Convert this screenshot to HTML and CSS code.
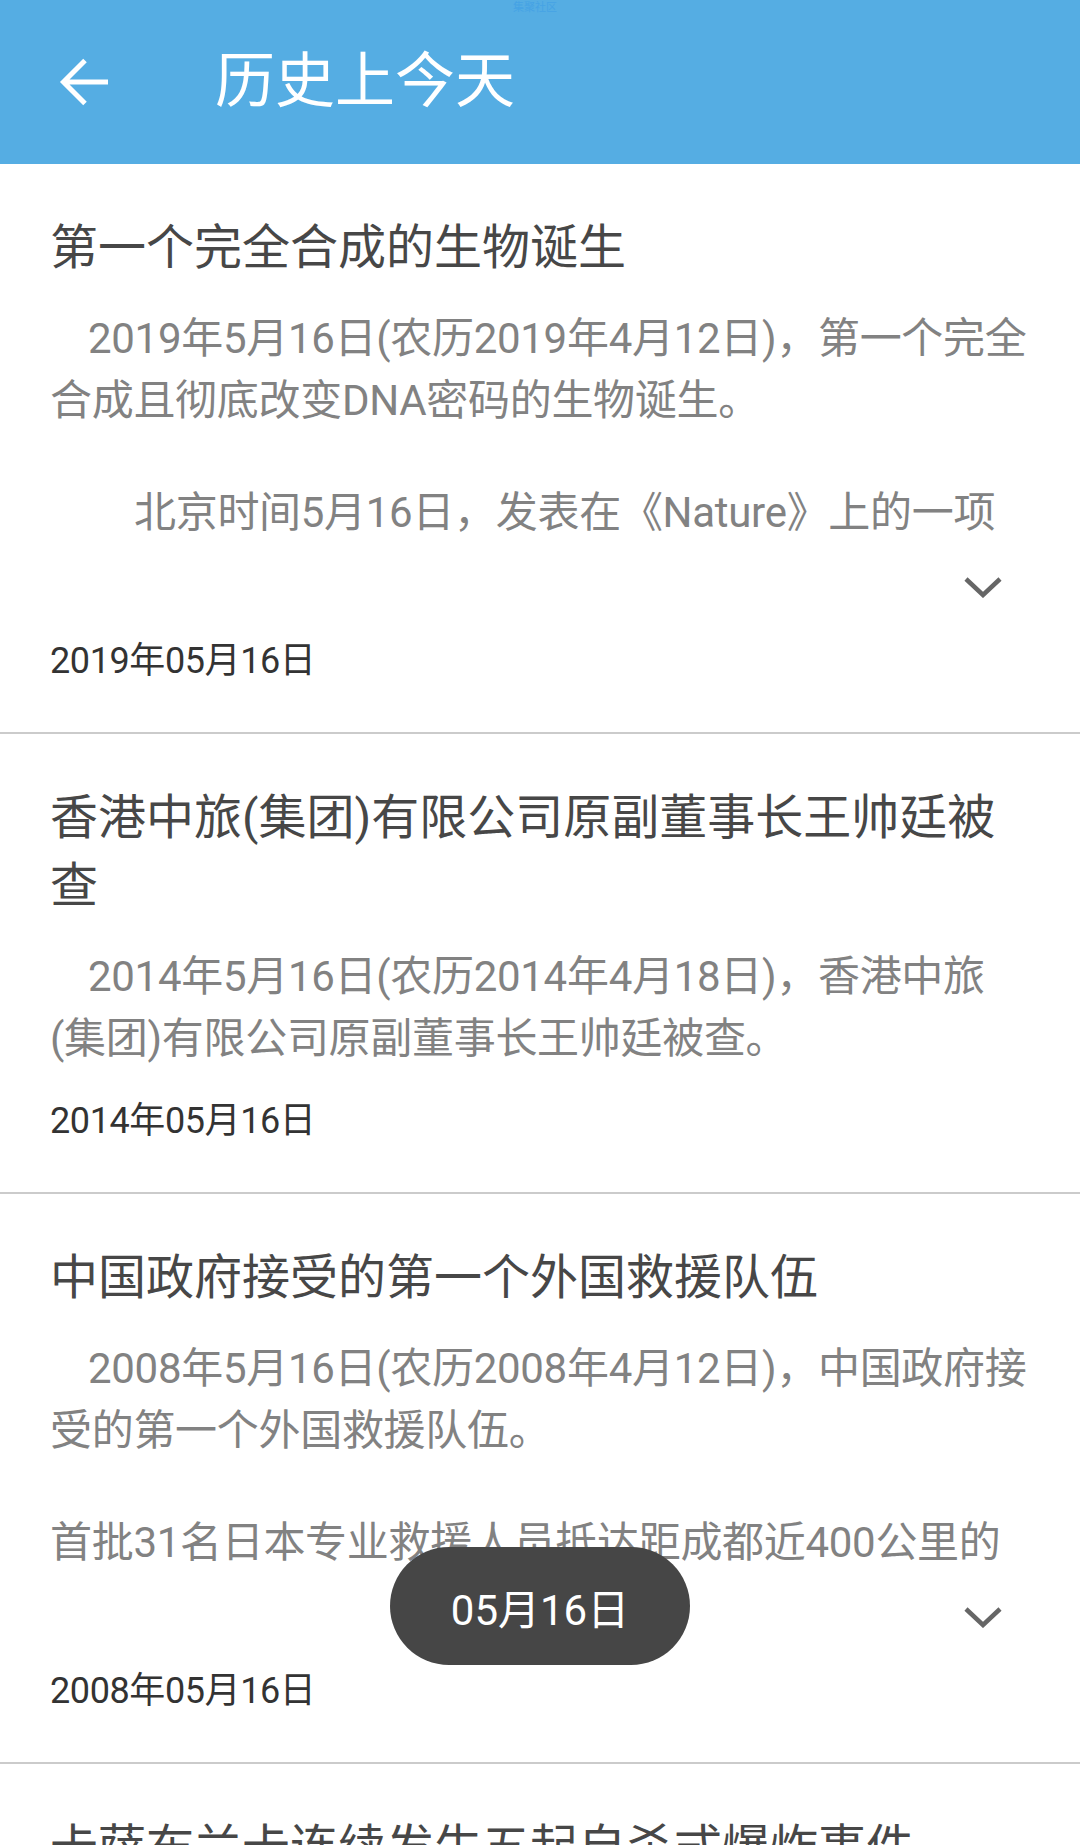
FILE: index.html
```html
<!DOCTYPE html>
<html lang="zh-CN">
<head>
<meta charset="utf-8">
<title>历史上今天</title>
<link rel="stylesheet" href="styles.css">
</head>
<body>
<header class="appbar">
  <span class="watermark">集聚社区</span>
  <button class="back" aria-label="返回">
    <svg width="50" height="48" viewBox="0 0 50 48"><path d="M49 24H4M26 2.5L4.5 24L26 45.5" fill="none" stroke="#fff" stroke-width="5"/></svg>
  </button>
  <h1 class="appbar-title">历史上今天</h1>
</header>

<main class="list">
  <article class="item">
    <h2 class="item-title">第一个完全合成的生物诞生</h2>
    <div class="item-body">
      <p class="indent">2019年5月16日(农历2019年4月12日)，第一个完全合成且彻底改变DNA密码的生物诞生。</p>
      <p class="indent2 clip">北京时间5月16日，发表在《Nature》上的一项</p>
    </div>
    <div class="more"><svg width="40" height="22" viewBox="0 0 40 22"><polyline points="3,3 20,19 37,3" fill="none" stroke="#666" stroke-width="4.5"/></svg></div>
    <time class="item-date">2019年05月16日</time>
  </article>

  <article class="item">
    <h2 class="item-title">香港中旅(集团)有限公司原副董事长王帅廷被查</h2>
    <div class="item-body">
      <p class="indent">2014年5月16日(农历2014年4月18日)，香港中旅(集团)有限公司原副董事长王帅廷被查。</p>
    </div>
    <time class="item-date">2014年05月16日</time>
  </article>

  <article class="item">
    <h2 class="item-title">中国政府接受的第一个外国救援队伍</h2>
    <div class="item-body">
      <p class="indent">2008年5月16日(农历2008年4月12日)，中国政府接受的第一个外国救援队伍。</p>
      <p class="clip">首批31名日本专业救援人员抵达距成都近400公里的</p>
    </div>
    <div class="more"><svg width="40" height="22" viewBox="0 0 40 22"><polyline points="3,3 20,19 37,3" fill="none" stroke="#666" stroke-width="4.5"/></svg></div>
    <time class="item-date">2008年05月16日</time>
  </article>

  <article class="item">
    <h2 class="item-title">卡萨布兰卡连续发生五起自杀式爆炸事件</h2>
    <div class="item-body">
      <p class="indent">2003年5月16日(农历2003年4月16日)，卡萨布兰卡连续发生五起自杀式爆炸事件。</p>
    </div>
    <time class="item-date">2003年05月16日</time>
  </article>
</main>

<div class="toast">05月16日</div>
</body>
</html>
```

FILE: styles.css
```css
* { box-sizing: border-box; }

html, body {
  margin: 0;
  padding: 0;
  background: #ffffff;
}

body {
  font-family: Roboto, "Noto Sans CJK SC", sans-serif;
  color: #444;
  width: 1080px;
  height: 1845px;
  overflow: hidden;
  position: relative;
}

.appbar {
  position: relative;
  height: 164px;
  background: #55ade3;
  display: flex;
  align-items: center;
  padding-left: 59px;
}

.watermark {
  position: absolute;
  top: 2px;
  left: 513px;
  font-size: 11px;
  line-height: 12px;
  color: #3f9fe6;
  opacity: 0.7;
}

.back {
  border: 0;
  padding: 0;
  margin: 0;
  background: transparent;
  width: 50px;
  height: 48px;
  display: flex;
}

.appbar-title {
  margin: 0 0 0 106px;
  font-size: 60px;
  line-height: 80px;
  font-weight: 400;
  color: #ffffff;
}

.list {
  display: flex;
  flex-direction: column;
}

.item {
  padding: 50px 40px 47px 50px;
  border-bottom: 2px solid #cbcbcb;
  display: flex;
  flex-direction: column;
}

.item-title {
  margin: 0;
  font-size: 48px;
  line-height: 68px;
  font-weight: 400;
  color: #474747;
}

.item-body {
  margin-top: 26px;
}

.item-body p {
  margin: 0;
  font-size: 42px;
  line-height: 62px;
  letter-spacing: -0.3px;
  color: #828282;
}

.item-body p + p {
  margin-top: 50px;
}

.indent { text-indent: 38px; }
.indent2 { text-indent: 84px; }

.clip {
  white-space: nowrap;
  overflow: hidden;
}

.more {
  margin-top: 20px;
  height: 46px;
  display: flex;
  justify-content: flex-end;
  align-items: center;
  padding-right: 37px;
}

.item-date {
  margin-top: 27px;
  font-size: 36px;
  line-height: 48px;
  letter-spacing: -0.4px;
  color: #333;
}

.toast {
  position: absolute;
  top: 1547px;
  left: 50%;
  transform: translateX(-50%);
  width: 300px;
  height: 118px;
  border-radius: 59px;
  background: #464646;
  color: #ffffff;
  font-size: 42px;
  display: flex;
  align-items: center;
  justify-content: center;
}
```
